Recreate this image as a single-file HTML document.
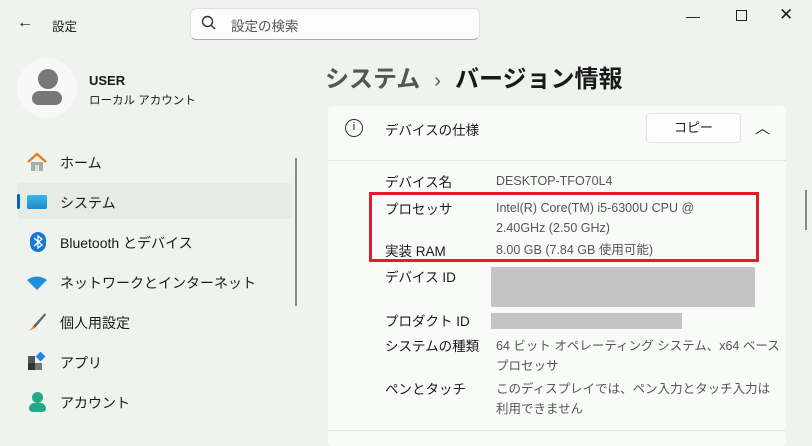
<!DOCTYPE html><html><head><meta charset="utf-8"><style>
*{margin:0;padding:0;box-sizing:border-box}
body{width:812px;height:437px;overflow:hidden;background:#eef3ee;font-family:"Liberation Sans","Noto Sans CJK JP",sans-serif;color:#1a1a1a;position:relative;font-size:14px}
.a{position:absolute;white-space:nowrap}
.nav{position:absolute;left:60px;font-size:14px}
.card{position:absolute;left:328px;top:106px;width:458px;height:340px;background:#f9fbf9;border-radius:4px}
.lbl{position:absolute;left:385px;font-size:13.5px}
.val{position:absolute;left:496px;font-size:12.5px;color:#555;line-height:20px}
</style></head><body>
<div class="a" style="left:17px;top:14px;font-size:16px">←</div>
<div class="a" style="left:52px;top:16px;font-size:12.5px">設定</div>
<div class="a" style="left:190px;top:8px;width:290px;height:32px;background:#fbfcfb;border:1px solid #dde3dd;border-bottom:1px solid #aab;border-radius:6px"></div>
<svg class="a" style="left:201px;top:15px" width="16" height="16"><circle cx="6.5" cy="6.5" r="5" fill="none" stroke="#333" stroke-width="1.4"/><path d="M10 10l4 4" stroke="#333" stroke-width="1.4"/></svg>
<div class="a" style="left:231px;top:15px;font-size:13.5px;color:#555">設定の検索</div>
<div class="a" style="left:686px;top:8px;font-size:14px">—</div>
<div class="a" style="left:736px;top:10px;width:11px;height:11px;border:1.3px solid #222"></div>
<div class="a" style="left:779px;top:5px;font-size:17px">✕</div>
<div class="a" style="left:17px;top:58px;width:60px;height:60px;border-radius:50%;background:#f7f8f7"></div>
<div class="a" style="left:38px;top:69px;width:20px;height:20px;border-radius:50%;background:#777"></div>
<div class="a" style="left:32px;top:91px;width:30px;height:14px;border-radius:8px 8px 7px 7px;background:#777"></div>
<div class="a" style="left:89px;top:73px;font-size:13px;font-weight:bold">USER</div>
<div class="a" style="left:89px;top:92px;font-size:11.5px">ローカル アカウント</div>
<div class="a" style="left:17px;top:183px;width:275px;height:36px;background:#e6ebe6;border-radius:4px"></div>
<div class="a" style="left:17px;top:194px;width:3px;height:15px;background:#0067c0;border-radius:2px"></div>
<div class="a" style="left:295px;top:158px;width:2px;height:148px;background:#888"></div>
<svg class="a" style="left:26px;top:151px" width="22" height="22"><path d="M2 11L11 3l9 8" stroke="#e67e22" stroke-width="2.5" fill="none"/><rect x="5" y="11" width="12" height="9" fill="#aaa"/><rect x="9" y="14" width="4" height="6" fill="#ddd"/></svg>
<div class="a" style="left:27px;top:195px;width:20px;height:14px;background:linear-gradient(#3cb6e8,#1a8ccc);border-radius:2px"></div>
<svg class="a" style="left:30px;top:232px" width="16" height="20"><rect width="16" height="20" rx="8" fill="#1478d4"/><path d="M4 6l8 7-4 3V4l4 3-8 7" stroke="#fff" stroke-width="1.3" fill="none"/></svg>
<svg class="a" style="left:26px;top:276px" width="22" height="14"><path d="M1 4Q11-3 21 4L11 14z" fill="#1e90e0"/></svg>
<svg class="a" style="left:27px;top:312px" width="20" height="20"><path d="M18 1L6 14l2 2L19 3z" fill="#666"/><path d="M6 14l2 2-6 3z" fill="#e8902a"/></svg>
<svg class="a" style="left:28px;top:352px" width="18" height="18"><rect x="0" y="4" width="7" height="7" fill="#555"/><rect x="0" y="11" width="7" height="7" fill="#333"/><rect x="7" y="11" width="7" height="7" fill="#777"/><rect x="9" y="1" width="7" height="7" fill="#1e88e5" transform="rotate(45 12.5 4.5)"/></svg>
<div class="a" style="left:32px;top:392px;width:11px;height:11px;border-radius:50%;background:#24a88a"></div>
<div class="a" style="left:29px;top:403px;width:17px;height:9px;border-radius:6px 6px 4px 4px;background:#24a88a"></div>
<div class="nav" style="top:153px">ホーム</div>
<div class="nav" style="top:193px">システム</div>
<div class="nav" style="top:233px">Bluetooth とデバイス</div>
<div class="nav" style="top:273px">ネットワークとインターネット</div>
<div class="nav" style="top:313px">個人用設定</div>
<div class="nav" style="top:353px">アプリ</div>
<div class="nav" style="top:393px">アカウント</div>
<div class="a" style="left:325px;top:59px;font-size:24px;font-weight:bold"><span style="color:#555">システム</span><span style="color:#555;font-weight:normal;font-size:20px;margin:0 14px">›</span>バージョン情報</div>
<div class="card"></div>
<div class="a" style="left:328px;top:160px;width:458px;height:1px;background:#e4e7e4"></div>
<div class="a" style="left:345px;top:119px;width:18px;height:18px;border:1.3px solid #333;border-radius:50%;font-size:11px;text-align:center;line-height:15px">i</div>
<div class="a" style="left:385px;top:119px;font-size:13.5px">デバイスの仕様</div>
<div class="a" style="left:646px;top:113px;width:95px;height:30px;background:#fdfefd;border:1px solid #e0e3e0;border-radius:4px;text-align:center;line-height:28px;font-size:13px">コピー</div>
<div class="a" style="left:755px;top:117px;font-size:15px">︿</div>
<div class="lbl" style="top:171px">デバイス名</div><div class="val" style="top:171px">DESKTOP-TFO70L4</div>
<div class="lbl" style="top:198px">プロセッサ</div><div class="val" style="top:198px">Intel(R) Core(TM) i5-6300U CPU @<br>2.40GHz (2.50 GHz)</div>
<div class="lbl" style="top:240px">実装 RAM</div><div class="val" style="top:240px">8.00 GB (7.84 GB 使用可能)</div>
<div class="a" style="left:369px;top:192px;width:390px;height:70px;border:3px solid #d9202c"></div>
<div class="lbl" style="top:266px">デバイス ID</div>
<div class="a" style="left:491px;top:267px;width:264px;height:40px;background:#c4c4c4"></div>
<div class="lbl" style="top:310px">プロダクト ID</div>
<div class="a" style="left:491px;top:313px;width:191px;height:16px;background:#c4c4c4"></div>
<div class="lbl" style="top:335px">システムの種類</div><div class="val" style="top:336px">64 ビット オペレーティング システム、x64 ベース<br>プロセッサ</div>
<div class="lbl" style="top:378px">ペンとタッチ</div><div class="val" style="top:379px">このディスプレイでは、ペン入力とタッチ入力は<br>利用できません</div>
<div class="a" style="left:328px;top:430px;width:458px;height:1px;background:#e4e7e4"></div>
<div class="a" style="left:805px;top:190px;width:2px;height:40px;background:#888"></div>
</body></html>
